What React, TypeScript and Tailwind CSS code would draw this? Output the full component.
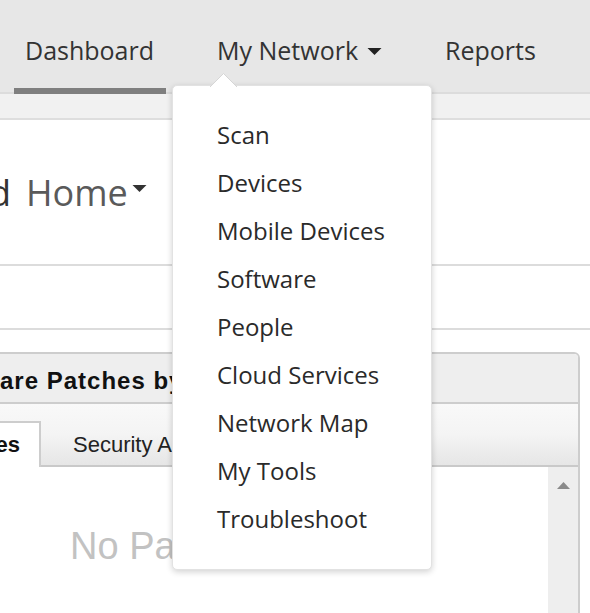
import React from "react";

const menuItems = [
  "Scan",
  "Devices",
  "Mobile Devices",
  "Software",
  "People",
  "Cloud Services",
  "Network Map",
  "My Tools",
  "Troubleshoot",
];

const Caret = ({ className }: { className: string }) => (
  <svg className={className} viewBox="0 0 16 8">
    <path d="M0 0 L16 0 L8 8 Z" fill="currentColor" />
  </svg>
);

const App = () => {
  return (
    <div className="relative w-[590px] h-[613px] overflow-hidden bg-white font-['Open_Sans',sans-serif]">
      {/* top nav */}
      <div className="h-[94px] bg-[#e7e7e7] shadow-[inset_0_-2px_0_#dcdcdc] flex pl-[14px] text-[25px] leading-[34px] text-[#333]">
        <div className="w-[152px] h-full pl-[11px] pt-[33px] border-b-[6px] border-[#7f7f7f] whitespace-nowrap">
          Dashboard
        </div>
        <div className="w-[279px] h-full pl-[51px] pt-[33px] flex items-start whitespace-nowrap">
          My Network
          <Caret className="w-[15px] h-[7px] ml-[9px] mt-[15px] text-[#222]" />
        </div>
        <div className="h-full pt-[33px] whitespace-nowrap">Reports</div>
      </div>
      <div className="h-[26px] bg-[#f1f1f1] border-b-2 border-[#dedede]" />

      {/* page heading */}
      <div className="mt-[48px] flex items-start text-[36px] leading-[49px] whitespace-nowrap">
        <div className="-ml-[200px] w-[211px] flex justify-end text-[#333]">
          Dashboard
        </div>
        <div className="ml-[15px] text-[#5a5a5a]">Home</div>
        <Caret className="w-[17px] h-[7px] ml-[3px] mt-[17px] text-[#333]" />
      </div>

      <div className="mt-[47px] h-[2px] bg-[#dcdcdc]" />
      <div className="mt-[62px] h-[2px] bg-[#dcdcdc]" />

      {/* patches panel */}
      <div className="mt-[22px] -ml-[10px] w-[590px] border-2 border-[#cdcdcd] rounded-tr-[6px] overflow-hidden font-['Liberation_Sans',Arial,sans-serif]">
        <div className="h-[50px] bg-[#eeeeee] border-b-2 border-[#cdcdcd] pl-[8px] pt-[14px] text-[24px] leading-[26px] tracking-[1px] font-bold text-[#111] whitespace-nowrap">
          are Patches by Severity
        </div>
        <div className="h-[63px] border-b-2 border-[#c9c9c9] bg-gradient-to-b from-[#f9f9f9] via-[#f4f4f4] to-[#e6e6e6] flex items-end text-[22px] leading-[25px] whitespace-nowrap">
          <div className="w-[49px] h-[46px] -mb-[2px] bg-white border-t-2 border-r-2 border-[#cdcdcd] flex justify-end pr-[19px] pt-[9px] font-bold text-[#111]">
            Updates
          </div>
          <div className="h-[46px] -mb-[2px] border-t-2 border-transparent pl-[32px] pt-[9px] text-[#222]">
            Security Advisories
          </div>
        </div>
        <div className="flex h-[200px]">
          <div className="flex-1 pl-[78px] pt-[57px] text-[38px] leading-[44px] text-[#c2c2c2] whitespace-nowrap">
            No Patches
          </div>
          <div className="w-[30px] bg-[#eeeeee] flex justify-center pt-[15px]">
            <svg className="w-[13px] h-[7px]" viewBox="0 0 13 7">
              <path d="M0 7 L6.5 0 L13 7 Z" fill="#8a8a8a" />
            </svg>
          </div>
        </div>
      </div>

      {/* dropdown menu */}
      <div className="absolute left-[172px] top-[85px] w-[260px] h-[485px] bg-white rounded-[5px] border border-[#e2e2e2] shadow-[0_2px_6px_rgba(0,0,0,0.18)] pt-[25px]">
        <svg
          className="absolute -top-[13px] left-[37px] w-[27px] h-[14px]"
          viewBox="0 0 27 14"
        >
          <path d="M0 14 L13.5 0.5 L27 14 Z" fill="#ffffff" />
          <path d="M0 14 L13.5 0.5 L27 14" fill="none" stroke="#d6d6d6" strokeWidth="1" />
        </svg>
        <ul className="text-[24px] leading-[48px] text-[#2a2a2a]">
          {menuItems.map((item) => (
            <li key={item} className="pl-[44px] whitespace-nowrap">
              {item}
            </li>
          ))}
        </ul>
      </div>
    </div>
  );
};

export default App;
